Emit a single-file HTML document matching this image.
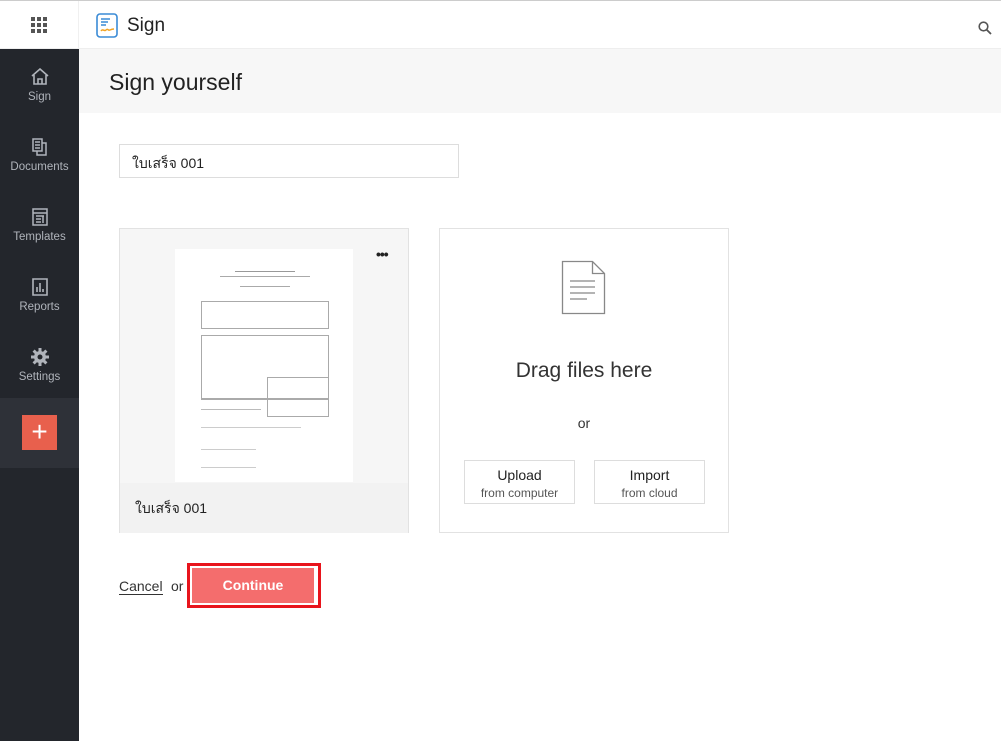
<!DOCTYPE html>
<html><head><meta charset="utf-8"><style>
*{box-sizing:border-box;margin:0;padding:0}
body{width:1001px;height:741px;overflow:hidden;background:#fff;font-family:"Liberation Sans","Noto Sans CJK SC",sans-serif;color:#222;position:relative}
.abs{position:absolute}
.top{left:0;top:0;width:1001px;height:49px;border-top:1px solid #ccc;background:#fff;border-bottom:1px solid #eee}
.side{left:0;top:49px;width:79px;height:692px;background:#23262c}
.nav{position:absolute;left:0;width:79px;text-align:center;color:#b0b4bb;font-size:11.5px}
.nav svg{display:block;margin:0 auto 5px}
</style></head><body>
<div class="abs top">
  <svg class="abs" style="left:31px;top:16px" width="16" height="16" viewBox="0 0 16 16" fill="#555"><rect x="0" y="0" width="4" height="4"/><rect x="6" y="0" width="4" height="4"/><rect x="12" y="0" width="4" height="4"/><rect x="0" y="6" width="4" height="4"/><rect x="6" y="6" width="4" height="4"/><rect x="12" y="6" width="4" height="4"/><rect x="0" y="12" width="4" height="4"/><rect x="6" y="12" width="4" height="4"/><rect x="12" y="12" width="4" height="4"/></svg>
  <div class="abs" style="left:78px;top:0;width:1px;height:48px;background:#f0f0f0"></div>
  <svg class="abs" style="left:96px;top:12px" width="22" height="25" viewBox="0 0 22 25"><rect x="1" y="1" width="20" height="23" rx="3" fill="#fff" stroke="#3a8bd6" stroke-width="1.6"/><path d="M5 6h9M5 9h7M5 12h5" stroke="#3a8bd6" stroke-width="1.5"/><path d="M5 18c2-3 3 1 5-1s2 1 4 0 2-1 4-1" stroke="#f2a424" stroke-width="1.5" fill="none"/></svg>
  <div class="abs" style="left:127px;top:14px;font-size:19px;color:#222">Sign</div>
  <svg class="abs" style="left:978px;top:20px" width="14" height="14" viewBox="0 0 14 14"><circle cx="5.5" cy="5.5" r="4.3" stroke="#555" stroke-width="1.6" fill="none"/><path d="M8.7 8.7L13 13" stroke="#555" stroke-width="1.8"/></svg>
</div>
<div class="abs side">
  <div class="nav" style="top:19px"><svg width="18" height="18" viewBox="0 0 18 18" fill="none" stroke="#b0b4bb" stroke-width="1.6"><path d="M1 8L9 1l8 7M3 7v9h12V7M7 16v-5h4v5"/></svg>Sign</div>
  <div class="nav" style="top:89px"><svg width="18" height="18" viewBox="0 0 18 18" fill="none" stroke="#b0b4bb" stroke-width="1.5"><path d="M2 1h9v12H2zM4 4h5M4 7h5M4 10h5M11 5h4v12H6v-4"/></svg>Documents</div>
  <div class="nav" style="top:159px"><svg width="18" height="18" viewBox="0 0 18 18" fill="none" stroke="#b0b4bb" stroke-width="1.5"><path d="M2 1h14v16H2zM2 5h14M5 8h8M5 11h5M5 14h5M12 8v7"/></svg>Templates</div>
  <div class="nav" style="top:229px"><svg width="18" height="18" viewBox="0 0 18 18" fill="none" stroke="#b0b4bb" stroke-width="1.6"><path d="M2 1h14v16H2zM6 14V9M9 14V5M12 14v-3"/></svg>Reports</div>
  <div class="nav" style="top:299px"><svg width="18" height="18" viewBox="0 0 18 18"><circle cx="9" cy="9" r="6" fill="#b0b4bb"/><g stroke="#b0b4bb" stroke-width="3"><path d="M9 0v18M0 9h18M2.6 2.6l12.8 12.8M15.4 2.6L2.6 15.4"/></g><circle cx="9" cy="9" r="2.5" fill="#23262c"/></svg>Settings</div>
  <div class="abs" style="left:0;top:349px;width:79px;height:70px;background:#2e3138"></div>
  <div class="abs" style="left:22px;top:366px;width:35px;height:35px;background:#e8604d;color:#fff;font-size:28px;line-height:33px;text-align:center">+</div>
</div>
<div class="abs" style="left:79px;top:49px;width:922px;height:64px;background:#f7f7f7"></div>
<div class="abs" style="left:109px;top:69px;font-size:23px;color:#222">Sign yourself</div>
<div class="abs" style="left:119px;top:144px;width:340px;height:34px;border:1px solid #ddd;font-size:14px;padding:8px 12px">ใบเสร็จ 001</div>

<div class="abs" style="left:119px;top:228px;width:290px;height:305px;border:1px solid #e2e2e2;background:#f6f6f6">
  <div class="abs" style="left:55px;top:20px;width:178px;height:233px;background:#fff">
    <div class="abs" style="left:60px;top:22px;width:60px;height:1px;background:#999"></div>
    <div class="abs" style="left:45px;top:27px;width:90px;height:1px;background:#aaa"></div>
    <div class="abs" style="left:65px;top:37px;width:50px;height:1px;background:#aaa"></div>
    <div class="abs" style="left:26px;top:52px;width:128px;height:28px;border:1px solid #aaa"></div>
    <div class="abs" style="left:26px;top:86px;width:128px;height:64px;border:1px solid #aaa"></div>
    <div class="abs" style="left:26px;top:150px;width:128px;height:1px;background:#aaa"></div>
    <div class="abs" style="left:92px;top:128px;width:62px;height:40px;border:1px solid #aaa"></div>
    <div class="abs" style="left:26px;top:160px;width:60px;height:1px;background:#bbb"></div>
    <div class="abs" style="left:26px;top:178px;width:100px;height:1px;background:#ccc"></div>
    <div class="abs" style="left:26px;top:200px;width:55px;height:1px;background:#ccc"></div>
    <div class="abs" style="left:26px;top:218px;width:55px;height:1px;background:#ccc"></div>
  </div>
  <div class="abs" style="left:256px;top:17px;font-size:14px;font-weight:bold;letter-spacing:-1px">•••</div>
  <div class="abs" style="left:0;top:254px;width:288px;height:50px;background:#f2f2f2"></div>
  <div class="abs" style="left:15px;top:269px;font-size:14px">ใบเสร็จ 001</div>
</div>

<div class="abs" style="left:439px;top:228px;width:290px;height:305px;border:1px solid #e2e2e2;background:#fff">
  <svg class="abs" style="left:121px;top:31px" width="46" height="55" viewBox="0 0 46 55" fill="none" stroke="#888" stroke-width="1.3"><path d="M1.5 1.5h30l12 12v40h-42z"/><path d="M31.5 1.5v12h12"/><path d="M9 21h25M9 27h25M9 33h25M9 39h17"/></svg>
  <div class="abs" style="left:0;width:288px;top:130px;text-align:center;font-size:21px;color:#333">Drag files here</div>
  <div class="abs" style="left:0;width:288px;top:186px;text-align:center;font-size:14px;color:#333">or</div>
  <div class="abs" style="left:24px;top:231px;width:111px;height:44px;border:1px solid #ddd;text-align:center;font-size:14px;padding-top:6px;line-height:17px">Upload<br><span style="font-size:12px;color:#555">from computer</span></div>
  <div class="abs" style="left:154px;top:231px;width:111px;height:44px;border:1px solid #ddd;text-align:center;font-size:14px;padding-top:6px;line-height:17px">Import<br><span style="font-size:12px;color:#555">from cloud</span></div>
</div>

<div class="abs" style="left:119px;top:578px;font-size:14px;color:#333;border-bottom:1px solid #333;line-height:16px">Cancel</div>
<div class="abs" style="left:171px;top:578px;font-size:14px;color:#333;line-height:16px">or</div>
<div class="abs" style="left:187px;top:563px;width:134px;height:45px;border:3px solid #e8141c;padding:2px">
  <div style="width:122px;height:35px;background:#f46d6d;color:#fff;font-weight:bold;font-size:14px;text-align:center;line-height:34px">Continue</div>
</div>
</body></html>
